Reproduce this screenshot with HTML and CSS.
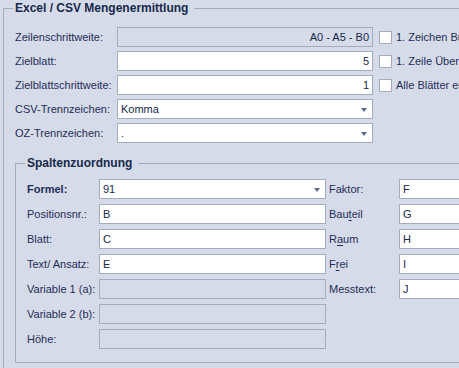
FILE: index.html
```html
<!DOCTYPE html>
<html lang="de">
<head>
    <meta charset="UTF-8">
    <title>Excel / CSV Mengenermittlung</title>
    <link rel="stylesheet" href="styles.css">
</head>
<body>
    <fieldset class="group outer">
        <legend>Excel / CSV Mengenermittlung</legend>

        <div class="settings">
            <div class="row">
                <label class="lbl">Zeilenschrittweite:</label>
                <div class="field disabled right">A0 - A5 - B0</div>
                <span class="check"></span>
                <span class="check-lbl">1. Zeichen Buchstabe</span>
            </div>
            <div class="row">
                <label class="lbl">Zielblatt:</label>
                <div class="field right">5</div>
                <span class="check"></span>
                <span class="check-lbl">1. Zeile Überschrift</span>
            </div>
            <div class="row">
                <label class="lbl">Zielblattschrittweite:</label>
                <div class="field right">1</div>
                <span class="check"></span>
                <span class="check-lbl">Alle Blätter einlesen</span>
            </div>
            <div class="row">
                <label class="lbl">CSV-Trennzeichen:</label>
                <div class="field combo">Komma</div>
            </div>
            <div class="row">
                <label class="lbl">OZ-Trennzeichen:</label>
                <div class="field combo">.</div>
            </div>
        </div>

        <fieldset class="group inner">
            <legend>Spaltenzuordnung</legend>
            <div class="columns">
                <label class="lbl bold">Formel:</label>
                <div class="field combo">91</div>
                <label class="lbl second">Faktor:</label>
                <div class="field">F</div>

                <label class="lbl">Positionsnr.:</label>
                <div class="field">B</div>
                <label class="lbl second">Bau<u>t</u>eil</label>
                <div class="field">G</div>

                <label class="lbl">Blatt:</label>
                <div class="field">C</div>
                <label class="lbl second">R<u>a</u>um</label>
                <div class="field">H</div>

                <label class="lbl">Text/ Ansatz:</label>
                <div class="field">E</div>
                <label class="lbl second">F<u>r</u>ei</label>
                <div class="field">I</div>

                <label class="lbl">Variable 1 (a):</label>
                <div class="field disabled"></div>
                <label class="lbl second">Messtext:</label>
                <div class="field">J</div>

                <label class="lbl">Variable 2 (b):</label>
                <div class="field disabled"></div>
                <span></span>
                <span></span>

                <label class="lbl">Höhe:</label>
                <div class="field disabled"></div>
            </div>
        </fieldset>
    </fieldset>
</body>
</html>
```

FILE: styles.css
```css
html, body { margin: 0; height: 100%; overflow: hidden; }
body { background-color: #d6dbe9; font-family: "Liberation Sans", Arial, sans-serif; font-size: 11px; color: #1e2d58; }

.group { border: 1px solid #a4abba; margin: 0; min-width: 0; }
.group legend { font-weight: bold; font-size: 12px; color: #15294b; line-height: 16px; padding: 0 6px 0 2px; margin-left: -2px; }

.outer { width: 560px; min-height: 470px; margin-left: 3px; padding: 11px 0 0 11px; }
.inner { width: 520px; margin: 12px 0 0 0; padding: 8px 0 13px 11px; }

.settings { display: flex; flex-direction: column; gap: 4px; }
.row { display: flex; align-items: center; height: 20px; }
.row .lbl { width: 102px; }
.row .field { width: 256px; }

.lbl { white-space: nowrap; }
.lbl.bold { font-weight: bold; }
.lbl.second { padding-left: 3px; }
.lbl u { text-decoration-thickness: 1px; text-underline-offset: 2px; }

.field { box-sizing: border-box; height: 20px; line-height: 18px; border: 1px solid #a4abba; background: #fff; padding: 0 3px; color: #15294b; white-space: nowrap; overflow: hidden; }
.field.right { text-align: right; }
.field.disabled { background: #d6dbe9; }
.field.combo { position: relative; }
.field.combo::after { content: ""; position: absolute; right: 5px; top: 8px; border-left: 3.5px solid transparent; border-right: 3.5px solid transparent; border-top: 4px solid #5d6b8a; }

.check { box-sizing: border-box; width: 13px; height: 13px; border: 1px solid #a4abba; background: #fff; margin: 0 4px 0 6px; }
.check-lbl { white-space: nowrap; }

.columns { display: grid; grid-template-columns: 72px 227px 73px 120px; grid-auto-rows: 20px; row-gap: 5px; align-items: center; }
```
